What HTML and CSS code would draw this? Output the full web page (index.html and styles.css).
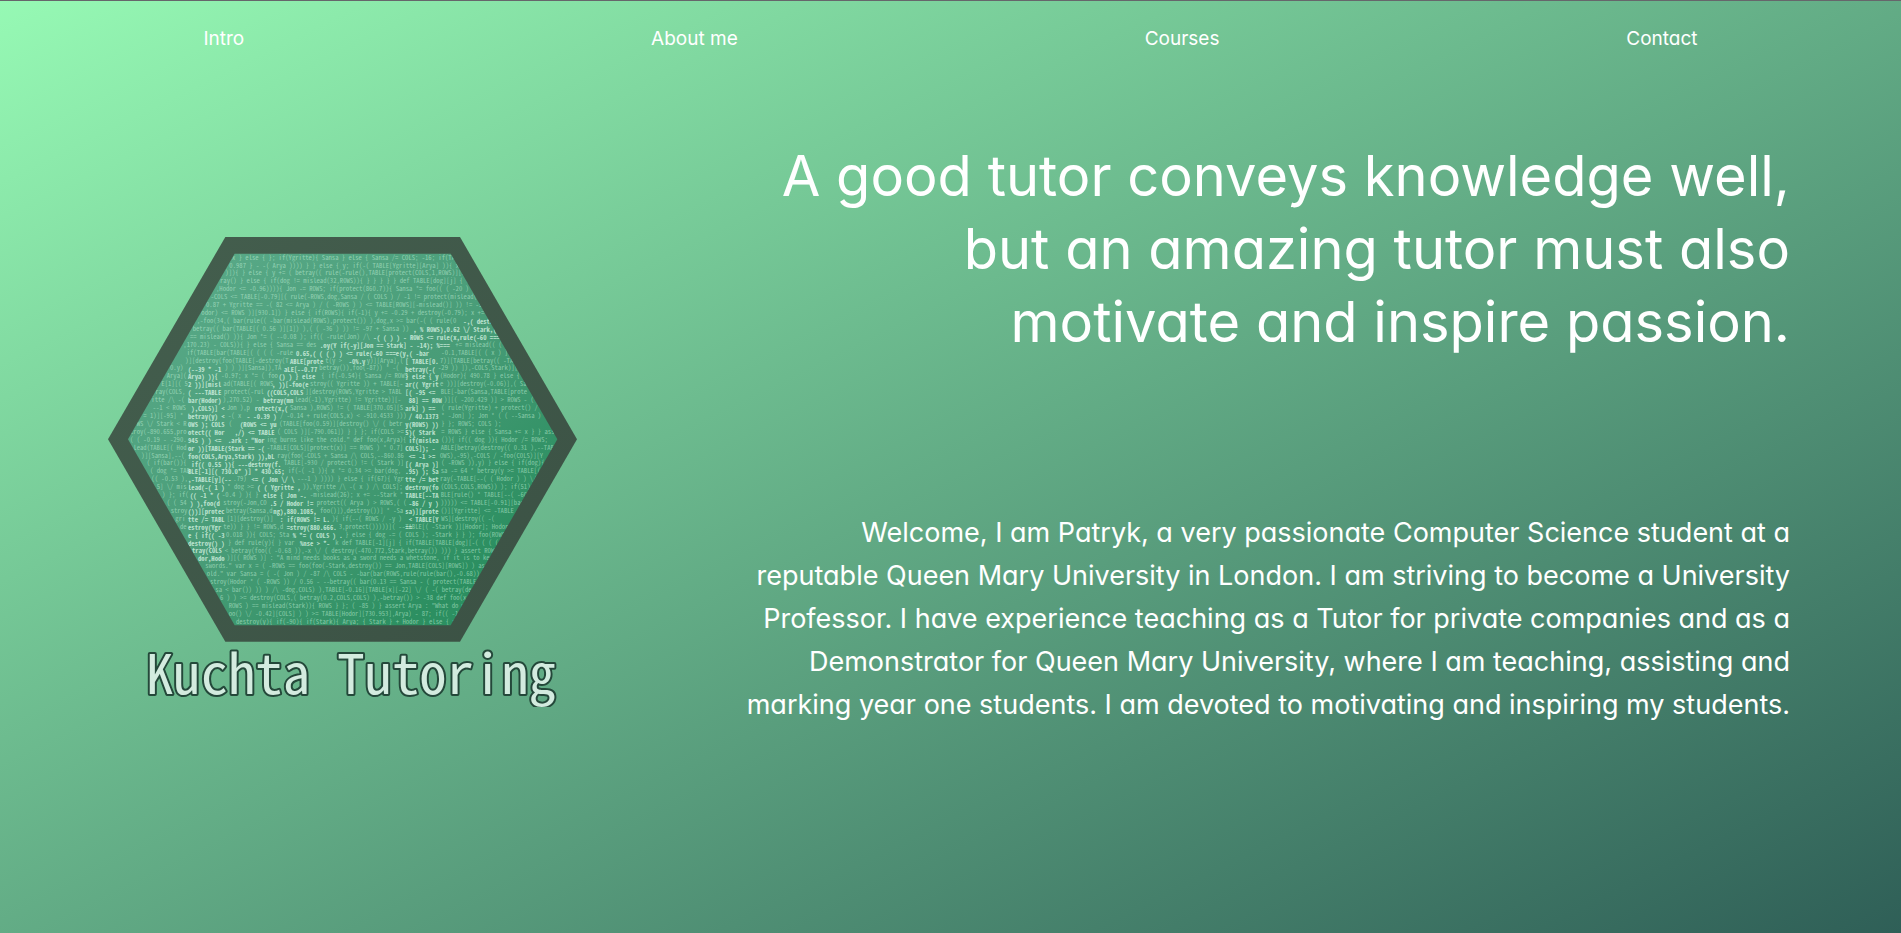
FILE: index.html
```html
<!DOCTYPE html>
<html lang="en">
<head>
<meta charset="utf-8">
<title>Kuchta Tutoring</title>
<link rel="stylesheet" href="styles.css">
</head>
<body>
<nav class="nav">
  <a class="nav-link" href="#intro">Intro</a>
  <a class="nav-link" href="#about">About me</a>
  <a class="nav-link" href="#courses">Courses</a>
  <a class="nav-link" href="#contact">Contact</a>
</nav>
<main class="hero" id="intro">
  <svg class="logo" viewBox="54 51 1407 1410" role="img" aria-label="Kuchta Tutoring logo">
    <defs>
      <linearGradient id="fill" gradientUnits="userSpaceOnUse" x1="434" y1="101" x2="1200" y2="1000">
        <stop offset="0" stop-color="#57a886"/>
        <stop offset="0.55" stop-color="#489c77"/>
        <stop offset="1" stop-color="#2c8f61"/>
      </linearGradient>
      <linearGradient id="frame" x1="0" y1="0" x2="1" y2="1">
        <stop offset="0" stop-color="#445f4e"/>
        <stop offset="1" stop-color="#3b5144"/>
      </linearGradient>
      <clipPath id="inner"><polygon points="114,658 434,101 1082,101 1402,658 1082,1216 434,1216"/></clipPath>
    </defs>
    <polygon fill="url(#frame)" points="54,658 406,51 1110,51 1461,658 1110,1265 406,1265"/>
    <polygon fill="url(#fill)" points="114,658 434,101 1082,101 1402,658 1082,1216 434,1216"/>
    <g clip-path="url(#inner)">
      <g class="code">
        <text x="426" y="119">x } else { }; if(Ygritte){ Sansa } else { Sansa /= COLS; -16; if(TABLE</text>
        <text x="418" y="143">0.987 } - -( Arya )))) } } else { y; if(-( TABLE[Ygritte][Arya] )){ x</text>
        <text x="406" y="166">)]){ } else { y += ( betray(( rule(-rule(),TABLE[protect(COLS,1,ROWS)][3</text>
        <text x="390" y="190">ray() } else { if(dog != mislead(32,ROWS)){ } } } } } def TABLE[dog][j] { var</text>
        <text x="378" y="214">,Hodor &lt;= -0.96)))){ Jon -= ROWS; if(protect(860.7)){ Sansa *= foo(( ( -20 ) =</text>
        <text x="362" y="238">-COLS &lt;= TABLE[-0.79][( rule(-ROWS,dog,Sansa / ( COLS ) / -1 != protect(mislead(</text>
        <text x="348" y="261">0.87 + Ygritte == -( 82 &lt;= Arya ) / ( -ROWS ) ) &lt;= TABLE[ROWS][-mislead()] )) != -5</text>
        <text x="334" y="285">odor) &lt;= ROWS )][930.1]) } else { if(ROWS){ if(-1){ y += -0.29 + destroy(-0.79); x +=</text>
        <text x="320" y="309">,-foo(34,( bar(rule(( -bar(mislead(ROWS),protect()) ),dog,x &gt;= bar(-( ( rule(0</text>
        <text x="308" y="333">betray(( bar(TABLE[( 0.56 )][1]) ),( ( -36 ) )) != -97 + Sansa ))</text>
        <text x="300" y="356">== mislead() )){ Jon *= ( --0.08 ); if(( -rule(Jon) /\</text>
        <text x="280" y="380">,170.23) - COLS)){ } else { Sansa == des</text><text x="1096" y="380">+= mislead(( (</text>
        <text x="290" y="404">if(TABLE[bar(TABLE[( ( ( ( -rule</text><text x="1054" y="404">-0.1,TABLE[( ( x ) ]</text>
        <text x="286" y="428">)][destroy(foo(TABLE[-destroy(T</text><text x="706" y="428">t(y &gt;</text><text x="830" y="428">y)][Arya],(</text><text x="1050" y="428">7)][TABLE[betray(( -TAB</text>
        <text x="240" y="451">0.y)</text><text x="404" y="451">) ) )][Sansa]),TA</text><text x="688" y="451">betray()),foo(-87)) * -(</text><text x="1044" y="451">-29 )) ]),-COLS,Stark)][x</text>
        <text x="230" y="475">Arya](</text><text x="394" y="475">-0.97; x *= ( foo</text><text x="694" y="475">{ if(-0.54){ Sansa /= ROWS</text><text x="1050" y="475">(Hodor){ 490.78 } else {</text>
        <text x="214" y="499">E[1][( 5</text><text x="400" y="499">ad(TABLE[( ROWS</text><text x="660" y="499">stroy(( Ygritte )) + TABLE[-</text><text x="1050" y="499">e ))][destroy(-0.06)],( Sa</text>
        <text x="196" y="523">ray(COLS,</text><text x="402" y="523">protect(-rul</text><text x="646" y="523">][destroy(ROWS,Ygritte &gt; TABL</text><text x="1052" y="523">BLE[-bar(Sansa,TABLE[prote</text>
        <text x="184" y="546">itte /\ -(</text><text x="398" y="546">),270.52) -</text><text x="614" y="546">lead(-1),Ygritte) != Ygritte)][-</text><text x="1062" y="546">)][( -200.429 )] &gt; ROWS - (</text>
        <text x="188" y="570">--1 &lt; ROWS</text><text x="410" y="570">Jon ),p</text><text x="600" y="570">Sansa ),ROWS) != ( TABLE[370.05][S</text><text x="1054" y="570">( rule(Ygritte) + protect() / -</text>
        <text x="160" y="594">= 1)][-95] *</text><text x="414" y="594">-( x</text><text x="570" y="594">/ -0.14 + rule(COLS,x) &lt; -910.4533 )))</text><text x="1054" y="594">* -Jon] ); Jon * ( ( --Sansa )</text>
        <text x="140" y="618">WS \/ Stark &lt; R</text><text x="416" y="618">(</text><text x="568" y="618">(TABLE[foo(0.59)][destroy() \/ ( betr</text><text x="1054" y="618">} }; ROWS; COLS );</text>
        <text x="120" y="641">troy(-890.655,pro</text><text x="562" y="641">( COLS )][-790.061]) } } }; if(COLS &gt;=</text><text x="1054" y="641">= ROWS } else { Sansa += x } } ass</text>
        <text x="120" y="665">( ( -0.19 - -290.</text><text x="530" y="665">ing burns like the cold." def foo(x,Arya){</text><text x="1054" y="665">()){ if(( dog )){ Hodor /= ROWS;</text>
        <text x="130" y="689">lead(TABLE[( Hod</text><text x="530" y="689">-TABLE[COLS][protect(x)] == ROWS ) * 0.7]</text><text x="1052" y="689">ABLE[betray(destroy(( 0.31 ),--TAB</text>
        <text x="154" y="713">)][Sansa],--(</text><text x="562" y="713">ray(foo(-COLS + Sansa /\ COLS,--860.86</text><text x="1050" y="713">OWS),-95),-COLS / -foo(COLS)][Y</text>
        <text x="170" y="736">( if(bar()){</text><text x="582" y="736">TABLE[-930 / protect() != ( Stark )]</text><text x="1054" y="736">( -ROWS )),y) } else { if(dog){</text>
        <text x="180" y="760">( dog *= TAB</text><text x="594" y="760">if(-( -1 )){ x *= 0.34 &gt;= bar(dog,</text><text x="1052" y="760">sa -= 64 * betray(y &gt;= TABLE[(</text>
        <text x="184" y="784">(( -0.53 ),</text><text x="430" y="784">.79)</text><text x="622" y="784">---1 ) )))) } else { if(67){ Ygr</text><text x="1050" y="784">ray(-TABLE[--( ( Hodor ) ) \/</text>
        <text x="200" y="808">5] \/ mis</text><text x="412" y="808">* dog &gt;=</text><text x="638" y="808">)),Ygritte /\ -( x ) /\ COLS];</text><text x="1052" y="808">(COLS,COLS,ROWS)) ); if(51){</text>
        <text x="216" y="831">) }; if(</text><text x="396" y="831">-0.4 ) ){ }</text><text x="660" y="831">-mislead(26); x += --Stark *</text><text x="1052" y="831">BLE[rule() * TABLE[--( -600</text>
        <text x="230" y="855">( ( 54</text><text x="400" y="855">stroy(-Jon,CO</text><text x="680" y="855">protect(( Arya ) &gt; ROWS,( (</text><text x="1052" y="855">))))) &lt;= TABLE[-0.91][bar</text>
        <text x="242" y="879">stroy</text><text x="408" y="879">betray(Sansa,d</text><text x="690" y="879">foo()]),destroy())] * -Sa</text><text x="1052" y="879">()][Ygritte] &lt;= -TABLE</text>
        <text x="256" y="903">gri</text><text x="410" y="903">[1][destroy()]</text><text x="726" y="903">){ if(--( ROWS / -y )</text><text x="1054" y="903">WS][destroy(( -(</text>
        <text x="270" y="926">de</text><text x="400" y="926">te)) } } != ROWS,d</text><text x="746" y="926">3,protect()))))]( --TABLE[( -Stark )][Hodor]; Hodor</text>
        <text x="408" y="950">0.018 )){ COLS; Sta</text><text x="766" y="950">} else { dog -= ( COLS ); -Stark } } ); foo(ROWS /</text>
        <text x="414" y="974">} def rule(y){ } var </text><text x="736" y="974">k def TABLE[-1][j] { if(TABLE[TABLE[dog][-( ( ( (</text>
        <text x="404" y="998">&lt; betray(foo(( -0.68 )),-x \/ ( destroy(-470.772,Stark,betray()) ))) } assert ROWS</text>
        <text x="410" y="1021">)][( ROWS )] : "A mind needs books as a sword needs a whetstone, if it is to kee</text>
        <text x="346" y="1045">swords." var x = ( -ROWS == foo(foo(-Stark,destroy()) == Jon,TABLE[COLS][ROWS]) ) as</text>
        <text x="350" y="1069">old." var Sansa = ( -( Jon ) / -87 /\ COLS - -bar(bar(ROWS,rule(rule(bar(),-0.68))</text>
        <text x="360" y="1093">stroy(Hodor * ( -ROWS )) / 0.56 - --betray(( bar(0.13 == Sansa - ( protect(TABLE[</text>
        <text x="376" y="1116">sa &lt; bar()) )) ) /\ -dog,COLS) ),TABLE[-0.16][TABLE[x][-22] \/ ( -( betray(de</text>
        <text x="390" y="1140">6 ) ) &gt;= destroy(COLS,( betray(0.2,COLS,COLS) ),-betray()) &gt; -38 def foo(x</text>
        <text x="416" y="1164">ROWS ) == mislead(Stark)){ ROWS } }; ( -85 ) } assert Arya : "What do w</text>
        <text x="416" y="1188">oo() \/ -0.42][COLS] ) ) &gt;= TABLE[Hodor][730.953],Arya) - 87; if(( -1</text>
        <text x="438" y="1211">destroy(y){ if(-90){ if(Stark){ Arya; { Stark } + Hodor } else { x</text>
      </g>
      <g class="code code-bright">
        <text x="1120" y="312">-,( destr</text>
        <text x="970" y="336">, % ROWS),0.62 \/ Stark,(</text>
        <text x="850" y="360">-( ( ) ) - ROWS &lt;= rule(x,rule(-60 ===</text>
        <text x="690" y="384">.oy(Y  if(-y][Jon == Stark] - -14); %===</text>
        <text x="618" y="407">0.65,( ( (    ) ) &lt;= rule(-60 ===e(y,( -bar</text>
        <text x="600" y="431">ABLE[prote</text><text x="776" y="431">-0%.y</text><text x="946" y="431">[ TABLE[0.</text>
        <text x="294" y="455">(--39 * -1</text><text x="582" y="455">aLE[--0.77</text><text x="946" y="455">betray(-(</text>
        <text x="294" y="478">Arya) )){</text><text x="566" y="478">() ) } else</text><text x="946" y="478">} else { y</text>
        <text x="294" y="502">2 ))][misl</text><text x="546" y="502">, ))[-foo(e</text><text x="946" y="502">ar(( Ygrit</text>
        <text x="294" y="526">( ---TABLE</text><text x="530" y="526">((COLS,COLS</text><text x="946" y="526">[( -95 &lt;=</text>
        <text x="294" y="550">bar(Hodor)</text><text x="520" y="550">betray(mn</text><text x="956" y="550">88] == ROW</text>
        <text x="304" y="573">),COLS)] &lt;</text><text x="494" y="573">rotect(x,(</text><text x="946" y="573">ark] ) == </text>
        <text x="294" y="597">betray(y) &lt;</text><text x="470" y="597">- -0.39 )</text><text x="956" y="597">/ 40.1373</text>
        <text x="294" y="621">OWS ); COLS</text><text x="450" y="621">(ROWS &lt;= yu</text><text x="946" y="621">y(ROWS) ))</text>
        <text x="294" y="645">otect(( Hor</text><text x="434" y="645">,/) &lt;= TABLE</text><text x="946" y="645">5)( Stark</text>
        <text x="294" y="668">945 ) ) &lt;=</text><text x="414" y="668">.ark : "Nor</text><text x="956" y="668">if(mislea</text>
        <text x="294" y="692">or ))[TABLE(Stark == -(</text><text x="946" y="692">COLS]);  -</text>
        <text x="294" y="716">foo(COLS,Arya,Stark) )),bL</text><text x="956" y="716">&lt;= -1 &gt;=</text>
        <text x="304" y="740">if(( 0.55 )){ ---destroy(f.</text><text x="946" y="740">[( Arya )]</text>
        <text x="294" y="763">BLE[-1][( 730.0* )] * 430.65;</text><text x="946" y="763">.95) ); Sa</text>
        <text x="294" y="787">,-TABLE[y](--</text><text x="484" y="787">&lt;= ( Jon \/ \</text><text x="946" y="787">tte /= bet</text>
        <text x="294" y="811">lead(-( 1 )</text><text x="502" y="811">( ( Ygritte ,</text><text x="946" y="811">destroy(fo</text>
        <text x="300" y="834">(( -1 * (</text><text x="520" y="834">else { Jon -.</text><text x="946" y="834">TABLE[--TA</text>
        <text x="300" y="858">) ),foo(d</text><text x="540" y="858">.5 / Hodor !=</text><text x="956" y="858">-86 / y )</text>
        <text x="294" y="882">())][protec</text><text x="550" y="882">ng),880.1085,</text><text x="946" y="882">sa)][prote</text>
        <text x="294" y="906">tte /= TABL</text><text x="570" y="906">: if(ROWS != L.</text><text x="956" y="906">&lt; TABLE[Y</text>
        <text x="294" y="929">estroy(Ygr</text><text x="590" y="929">=stroy(880.666.</text><text x="946" y="929">==</text>
        <text x="294" y="953">e { if(( -3</text><text x="608" y="953">% *= ( COLS ) .</text>
        <text x="294" y="977">destroy() )</text><text x="630" y="977">%nse &gt; *-</text>
        <text x="306" y="1000">tray(COLS</text>
        <text x="324" y="1024">dor,Hodo</text>
      </g>
    </g>
    <text class="wordmark" x="168" y="1422">Kuchta Tutoring</text>
  </svg>
  <section class="copy">
    <h1 class="headline">A good tutor conveys knowledge well,<br>but an amazing tutor must also<br>motivate and inspire passion.</h1>
    <p class="welcome">Welcome, I am Patryk, a very passionate Computer Science student at a<br>reputable Queen Mary University in London. I am striving to become a University<br>Professor. I have experience teaching as a Tutor for private companies and as a<br>Demonstrator for Queen Mary University, where I am teaching, assisting and<br>marking year one students. I am devoted to motivating and inspiring my students.</p>
  </section>
</main>
</body>
</html>
```
FILE: styles.css
```css
* {
  box-sizing: border-box;
}

body {
  margin: 0;
  min-height: 100vh;
  border-top: 1px solid #66666b;
  background: linear-gradient(to bottom right, #96f9b4, #2f5f57) no-repeat border-box;
  color: #fff;
  font-family: Inter, "Liberation Sans", sans-serif;
  font-feature-settings: "cv11";
}

.nav {
  display: flex;
  justify-content: space-around;
  padding: 24px 0;
}

.nav-link {
  color: inherit;
  font-size: 19px;
  line-height: 28px;
  text-decoration: none;
}

.hero {
  display: flex;
  justify-content: space-between;
  align-items: flex-start;
  padding: 63px 111px 60px 108px;
}

.logo {
  flex: none;
  width: 469px;
  height: 470px;
  margin-top: 97px;
}

.code {
  fill: #c8f5dc;
  fill-opacity: 0.55;
  font-family: "Noto Sans Mono CJK SC", "Liberation Mono", monospace;
  font-size: 20px;
  white-space: pre;
}

.code-bright {
  fill: #e0fbec;
  fill-opacity: 0.75;
  font-weight: 700;
}

.wordmark {
  fill: #d3ebdf;
  stroke: #24483a;
  stroke-width: 12px;
  stroke-linejoin: round;
  paint-order: stroke;
  font-family: "Noto Sans Mono CJK SC", "Liberation Mono", monospace;
  font-size: 164px;
  font-weight: 500;
}

.copy {
  text-align: right;
  white-space: nowrap;
}

.headline {
  margin: 0 0 152px;
  font-size: 56px;
  font-weight: 400;
  line-height: 73px;
}

.welcome {
  margin: 0;
  font-size: 27px;
  line-height: 43px;
}
```
